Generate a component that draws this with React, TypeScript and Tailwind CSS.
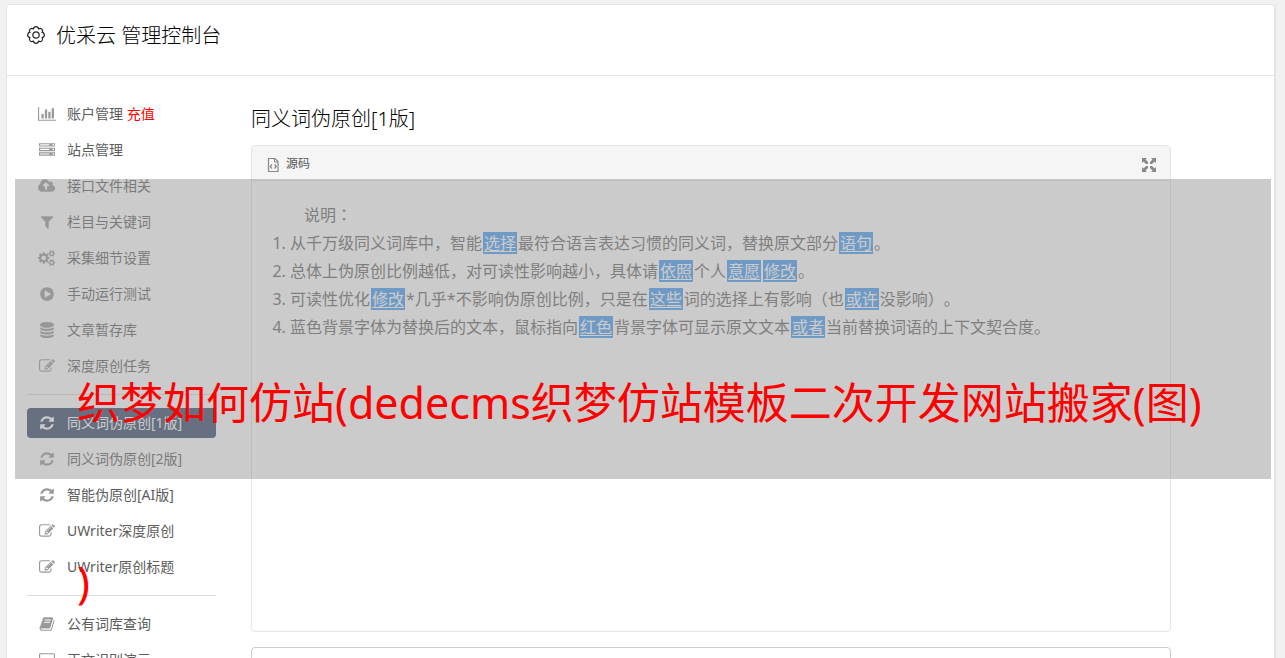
import type { ReactNode } from 'react';
import clsx from 'clsx';

interface MenuItem {
    label: string;
    icon: IconName;
    note?: string;
    active?: boolean;
}

const icons = {
    chart: {
        box: '0 0 2048 1792',
        d: 'M640 896v512h-256v-512h256zm384-512v1024h-256v-1024h256zm1024 1152v128h-2048v-1536h128v1408h1920zm-640-896v768h-256v-768h256zm384-384v1152h-256v-1152h256z',
    },
    server: {
        box: '0 0 1792 1792',
        d: 'M128 1408h1024v-128h-1024v128zm0-512h1024v-128h-1024v128zm1568 448q0-40-28-68t-68-28-68 28-28 68 28 68 68 28 68-28 28-68zm-1568-960h1024v-128h-1024v128zm1568 448q0-40-28-68t-68-28-68 28-28 68 28 68 68 28 68-28 28-68zm0-512q0-40-28-68t-68-28-68 28-28 68 28 68 68 28 68-28 28-68zm96 832v384h-1792v-384h1792zm0-512v384h-1792v-384h1792zm0-512v384h-1792v-384h1792z',
    },
    cloud: {
        box: '0 0 1920 1792',
        d: 'M1280 864q0-14-9-23l-352-352q-9-9-23-9t-23 9l-351 351q-10 12-10 24 0 14 9 23t23 9h224v352q0 13 9.5 22.5t22.5 9.5h192q13 0 22.5-9.5t9.5-22.5v-352h224q13 0 22.5-9.5t9.5-22.5zm640 288q0 159-112.5 271.5t-271.5 112.5h-1088q-185 0-316.5-131.5t-131.5-316.5q0-130 70-240t188-165q-2-30-2-43 0-212 150-362t362-150q156 0 285.5 87t188.5 231q71-62 166-62 106 0 181 75t75 181q0 76-41 138 130 31 213.5 135.5t83.5 238.5z',
    },
    filter: {
        box: '0 0 1792 1792',
        d: 'M1595 295q17 41-14 70l-493 493v742q0 42-39 59-13 5-25 5-27 0-45-19l-256-256q-19-19-19-45v-486l-493-493q-31-29-14-70 17-39 59-39h1280q42 0 59 39z',
    },
    cogs: {
        box: '0 0 1920 1792',
        d: 'M896 896q0-106-75-181t-181-75-181 75-75 181 75 181 181 75 181-75 75-181zm768 512q0-52-38-90t-90-38-90 38-38 90q0 53 37.5 90.5t90.5 37.5 90.5-37.5 37.5-90.5zm0-1024q0-52-38-90t-90-38-90 38-38 90q0 53 37.5 90.5t90.5 37.5 90.5-37.5 37.5-90.5zm-384 421v185q0 10-7 19.5t-16 10.5l-155 24q-11 35-32 76 34 48 90 115 7 11 7 20 0 12-7 19-23 30-82.5 89.5t-78.5 59.5q-11 0-21-7l-115-90q-37 19-77 31-11 108-23 155-7 24-30 24h-186q-11 0-20-7.5t-10-17.5l-23-153q-34-10-75-31l-118 89q-7 7-20 7-11 0-21-8-144-133-144-160 0-9 7-19 10-14 41-53t47-61q-23-44-35-82l-152-24q-10-1-17-9.5t-7-19.5v-185q0-10 7-19.5t16-10.5l155-24q11-35 32-76-34-48-90-115-7-11-7-20 0-12 7-20 22-30 82-89t79-59q11 0 21 7l115 90q34-18 77-32 11-108 23-154 7-24 30-24h186q11 0 20 7.5t10 17.5l23 153q34 10 75 31l118-89q8-7 20-7 11 0 21 8 144 133 144 160 0 8-7 19-12 16-42 54t-45 60q23 48 34 82l152 23q10 2 17 10.5t7 19.5zm640 533v140q0 16-149 31-12 27-30 52 51 113 51 138 0 4-4 7-122 71-124 71-8 0-46-47t-52-68q-20 2-30 2t-30-2q-14 21-52 68t-46 47q-2 0-124-71-4-3-4-7 0-25 51-138-18-25-30-52-149-15-149-31v-140q0-16 149-31 13-29 30-52-51-113-51-138 0-4 4-7 4-2 35-20t59-34 30-16q8 0 46 46.5t52 67.5q20-2 30-2t30 2q51-71 92-112l6-2q4 0 124 70 4 3 4 7 0 25-51 138 17 23 30 52 149 15 149 31zm0-1024v140q0 16-149 31-12 27-30 52 51 113 51 138 0 4-4 7-122 71-124 71-8 0-46-47t-52-68q-20 2-30 2t-30-2q-14 21-52 68t-46 47q-2 0-124-71-4-3-4-7 0-25 51-138-18-25-30-52-149-15-149-31v-140q0-16 149-31 13-29 30-52-51-113-51-138 0-4 4-7 4-2 35-20t59-34 30-16q8 0 46 46.5t52 67.5q20-2 30-2t30 2q51-71 92-112l6-2q4 0 124 70 4 3 4 7 0 25-51 138 17 23 30 52 149 15 149 31z',
    },
    play: {
        box: '0 0 1792 1792',
        d: 'M896 128q209 0 385.5 103t279.5 279.5 103 385.5-103 385.5-279.5 279.5-385.5 103-385.5-103-279.5-279.5-103-385.5 103-385.5 279.5-279.5 385.5-103zm384 823q32-18 32-55t-32-55l-544-320q-31-19-64-1-32 19-32 56v640q0 37 32 56 16 8 32 8 17 0 32-9z',
    },
    database: {
        box: '0 0 1792 1792',
        d: 'M896 768q237 0 443-43t325-127v170q0 69-103 128t-280 93.5-385 34.5-385-34.5-280-93.5-103-128v-170q119 84 325 127t443 43zm0 768q237 0 443-43t325-127v170q0 69-103 128t-280 93.5-385 34.5-385-34.5-280-93.5-103-128v-170q119 84 325 127t443 43zm0-384q237 0 443-43t325-127v170q0 69-103 128t-280 93.5-385 34.5-385-34.5-280-93.5-103-128v-170q119 84 325 127t443 43zm0-1152q208 0 385 34.5t280 93.5 103 128v128q0 69-103 128t-280 93.5-385 34.5-385-34.5-280-93.5-103-128v-128q0-69 103-128t280-93.5 385-34.5z',
    },
    edit: {
        box: '0 0 1792 1792',
        d: 'M888 1184l116-116-152-152-116 116v56h96v96h56zm440-720q-16-16-33 1l-350 350q-17 17-1 33t33-1l350-350q17-17 1-33zm80 594v190q0 119-84.5 203.5t-203.5 84.5h-832q-119 0-203.5-84.5t-84.5-203.5v-832q0-119 84.5-203.5t203.5-84.5h832q63 0 117 25 15 7 18 23 3 17-9 29l-49 49q-14 14-32 8-23-6-45-6h-832q-66 0-113 47t-47 113v832q0 66 47 113t113 47h832q66 0 113-47t47-113v-126q0-13 9-22l64-64q15-15 35-7t20 29zm-96-738l288 288-672 672h-288v-288zm444 132l-92 92-288-288 92-92q28-28 68-28t68 28l152 152q28 28 28 68t-28 68z',
    },
    refresh: {
        box: '0 0 1792 1792',
        d: 'M1639 1056q0 5-1 7-64 268-268 434.5t-478 166.5q-146 0-282.5-55t-243.5-157l-129 129q-19 19-45 19t-45-19-19-45v-448q0-26 19-45t45-19h448q26 0 45 19t19 45-19 45l-137 137q71 66 161 102t187 36q134 0 250-65t186-179q11-17 53-117 8-23 30-23h192q13 0 22.5 9.5t9.5 22.5zm25-800v448q0 26-19 45t-45 19h-448q-26 0-45-19t-19-45 19-45l138-138q-148-137-349-137-134 0-250 65t-186 179q-11 17-53 117-8 23-30 23h-199q-13 0-22.5-9.5t-9.5-22.5v-7q65-268 270-434.5t480-166.5q146 0 284 55.5t245 156.5l130-129q19-19 45-19t45 19 19 45z',
    },
    book: {
        box: '0 0 1792 1792',
        d: 'M1703 478q40 57 18 129l-275 906q-19 64-76.5 107.5t-122.5 43.5h-923q-77 0-148.5-53.5t-99.5-131.5q-24-67-2-127 0-4 3-27t4-37q1-8-3-21.5t-3-19.5q2-11 8-21t16.5-23.5 16.5-23.5q23-38 45-91.5t30-91.5q3-10 .5-30t-.5-28q3-11 17-28t17-23q21-36 42-92t25-90q1-9-2.5-32t.5-28q4-13 22-30.5t22-22.5q19-26 42.5-84.5t27.5-96.5q1-8-3-25.5t-2-26.5q2-8 9-18t18-23 17-21q8-12 16.5-30.5t15-35 16-36 19.5-32 26.5-23.5 36-11.5 47.5 5.5l-1 3q38-9 51-9h761q74 0 114 56t18 130l-274 906q-36 119-71.5 153.5t-128.5 34.5h-869q-27 0-38 15-11 16-1 43 24 70 144 70h923q29 0 56-15.5t35-41.5l300-987q7-22 5-57 38 15 59 43zm-1064 2q-4 13 2 22.5t20 9.5h608q13 0 25.5-9.5t16.5-22.5l21-64q4-13-2-22.5t-20-9.5h-608q-13 0-25.5 9.5t-16.5 22.5zm-83 256q-4 13 2 22.5t20 9.5h608q13 0 25.5-9.5t16.5-22.5l21-64q4-13-2-22.5t-20-9.5h-608q-13 0-25.5 9.5t-16.5 22.5z',
    },
    screen: {
        box: '0 0 1792 1792',
        d: 'M160 128h1472q66 0 113 47t47 113v1088q0 66-47 113t-113 47h-544v128h128v128h-640v-128h128v-128h-544q-66 0-113-47t-47-113v-1088q0-66 47-113t113-47zm0 128q-32 0-32 32v832h1536v-832q0-32-32-32z',
    },
};

type IconName = keyof typeof icons;

const menuGroups: MenuItem[][] = [
    [
        { label: '账户管理', icon: 'chart', note: '充值' },
        { label: '站点管理', icon: 'server' },
        { label: '接口文件相关', icon: 'cloud' },
        { label: '栏目与关键词', icon: 'filter' },
        { label: '采集细节设置', icon: 'cogs' },
        { label: '手动运行测试', icon: 'play' },
        { label: '文章暂存库', icon: 'database' },
        { label: '深度原创任务', icon: 'edit' },
    ],
    [
        { label: '同义词伪原创[1版]', icon: 'refresh', active: true },
        { label: '同义词伪原创[2版]', icon: 'refresh' },
        { label: '智能伪原创[AI版]', icon: 'refresh' },
        { label: 'UWriter深度原创', icon: 'edit' },
        { label: 'UWriter原创标题', icon: 'edit' },
    ],
    [
        { label: '公有词库查询', icon: 'book' },
        { label: '正文识别演示', icon: 'screen' },
    ],
];

function GearIcon() {
    return (
        <svg
            viewBox="0 0 18 18"
            className="mb-0.5 h-[18px] w-[18px]"
            fill="none"
            stroke="currentColor"
            strokeWidth="1.2"
            strokeLinejoin="round"
            aria-hidden="true">
            <path d="M15.100 6.470A2.550 2.550 0 0 1 15.100 11.530A2.550 2.550 0 0 1 11.530 15.100A2.550 2.550 0 0 1 6.470 15.100A2.550 2.550 0 0 1 2.900 11.530A2.550 2.550 0 0 1 2.900 6.470A2.550 2.550 0 0 1 6.470 2.900A2.550 2.550 0 0 1 11.530 2.900A2.550 2.550 0 0 1 15.100 6.470Z" />
            <circle cx="9" cy="9" r="3.200" />
        </svg>
    );
}

function MenuIcon({ name }: { name: IconName }) {
    return (
        <svg viewBox={icons[name].box} className="h-4 w-auto" fill="currentColor" aria-hidden="true">
            <path fillRule="evenodd" d={icons[name].d} />
        </svg>
    );
}

function MenuLink({ item }: { item: MenuItem }) {
    return (
        <a
            href="#"
            className={clsx(
                'flex h-[30px] items-center rounded-sm pl-[10px] text-sm',
                item.active ? 'bg-[#35496a] text-white' : 'text-[#5c5c5c]',
            )}>
            <span className={clsx('mr-[10px] flex w-5 justify-center', !item.active && 'text-[#999]')}>
                <MenuIcon name={item.icon} />
            </span>
            <span>
                {item.label}
                {item.note && <span className="text-[#f00]"> {item.note}</span>}
            </span>
        </a>
    );
}

function Sidebar() {
    return (
        <nav className="w-[189px] shrink-0">
            {menuGroups.map((group, i) => (
                <ul
                    key={i}
                    className={clsx('flex flex-col gap-1.5', i > 0 && 'mt-[13px] border-t border-[#ddd] pt-[13px]')}>
                    {group.map((item) => (
                        <li key={item.label}>
                            <MenuLink item={item} />
                        </li>
                    ))}
                </ul>
            ))}
        </nav>
    );
}

// Replaced word inside the editor text
function Word({ children }: { children: ReactNode }) {
    return <u className="mx-px bg-[#479df5] px-px text-white underline-offset-2">{children}</u>;
}

function Editor() {
    return (
        <section className="flex h-[487px] flex-col overflow-hidden rounded border border-[#e5e5e5]">
            <div className="flex h-[35px] items-center justify-between border-b border-[#e0e0e0] bg-[#f5f5f5] px-[14px] pt-0.5 text-[#555]">
                <button type="button" className="flex items-center gap-1.5 text-xs">
                    <svg viewBox="0 0 14 16" className="mt-0.5 h-4 w-3.5" fill="none" stroke="#888" aria-hidden="true">
                        <path d="M2.500 1.500h6.500l3 3v10h-9.500z" strokeWidth="1.2" />
                        <path d="M8.500 1.500v3.500h3.500" />
                        <path d="M6 7.500 4.200 9.500l1.800 2M8.500 7.500l1.800 2-1.800 2" strokeWidth="1.2" />
                    </svg>
                    源码
                </button>
                <button type="button" aria-label="全屏" className="mt-0.5">
                    <svg viewBox="0 0 14 14" className="h-3.5 w-3.5" fill="#888" aria-hidden="true">
                        <path d="M0 0h5L3.500 1.500 6 4v2H4L1.500 3.500 0 5zM14 0v5l-1.500-1.500L10 6H8V4l2.500-2.500L9 0zM0 14V9l1.500 1.500L4 8h2v2l-2.500 2.500L5 14zM14 14H9l1.500-1.500L8 10V8h2l2.500 2.500L14 9z" />
                    </svg>
                </button>
            </div>
            <div className="px-5 pt-[19px] text-base leading-7 text-[#666] [text-spacing-trim:space-all]">
                <p className="indent-8">
                    说明<span className="font-['Noto_Sans_CJK_TC',sans-serif]" lang="zh-TW">：</span>
                </p>
                <ol className="list-decimal pl-[18px]">
                    <li>
                        从千万级同义词库中，智能<Word>选择</Word>最符合语言表达习惯的同义词，替换原文部分<Word>语句</Word>。
                    </li>
                    <li>
                        总体上伪原创比例越低，对可读性影响越小，具体请<Word>依照</Word>个人<Word>意愿</Word><Word>修改</Word>。
                    </li>
                    <li>
                        可读性优化<Word>修改</Word>*几乎*不影响伪原创比例，只是在<Word>这些</Word>词的选择上有影响（也<Word>或许</Word>没影响）。
                    </li>
                    <li>
                        蓝色背景字体为替换后的文本，鼠标指向<Word>红色</Word>背景字体可显示原文文本<Word>或者</Word>当前替换词语的上下文契合度。
                    </li>
                </ol>
            </div>
        </section>
    );
}

export default function App() {
    return (
        <div
            lang="zh-CN"
            className="relative h-screen overflow-hidden bg-[#f1f1f1] pt-1 pr-[9px] pl-1.5 font-['Noto_Sans','Noto_Sans_CJK_SC',sans-serif]">
            <div className="min-h-screen rounded-t border border-r-2 border-[#e5e5e5] bg-white">
                <header className="flex h-[71px] items-center gap-[11px] border-b border-[#e5e5e5] px-5 pb-2 text-[#222]">
                    <GearIcon />
                    <h1 className="text-xl font-light text-black">优采云 管理控制台</h1>
                </header>
                <div className="flex gap-[35px] px-5 pt-[23px]">
                    <Sidebar />
                    <main className="max-w-[920px] flex-1">
                        <h2 className="mt-1 mb-[10px] text-xl leading-8 font-light text-black">同义词伪原创[1版]</h2>
                        <Editor />
                        <textarea
                            aria-label="原文"
                            className="mt-[15px] block h-40 w-full resize-none rounded border border-[#ccc] bg-white"
                        />
                    </main>
                </div>
            </div>

            <div className="absolute top-[179px] right-[14px] left-[15px] h-[300px] bg-[#979797]/50">
                <p className="pt-[134px] pl-[62px] text-[43px] leading-[179px] text-[#f00]">
                    织梦如何仿站(dedecms织梦仿站模板二次开发网站搬家(图)
                    <br />)
                </p>
            </div>
        </div>
    );
}
